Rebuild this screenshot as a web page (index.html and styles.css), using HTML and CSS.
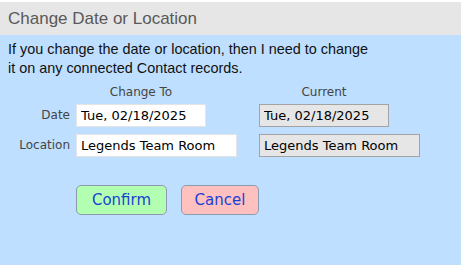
FILE: index.html
```html
<!DOCTYPE html>
<html lang="en">

<head>
    <meta charset="UTF-8">
    <meta name="viewport" content="width=device-width, initial-scale=1.0">
    <title>Change Date or Location</title>
    <link rel="stylesheet" href="styles.css">
</head>

<body>
    <div class="title">Change Date or Location</div>

    <div class="content">
        <p class="note">If you change the date or location, then I need to change<br>it on any connected Contact records.</p>

        <div class="form">
            <span></span>
            <span class="head">Change To</span>
            <span class="head">Current</span>

            <label class="name" for="newDate">Date</label>
            <input class="input date" id="newDate" type="text" value="Tue, 02/18/2025">
            <input class="input date current" type="text" value="Tue, 02/18/2025" readonly>

            <label class="name" for="newLoc">Location</label>
            <input class="input loc" id="newLoc" type="text" value="Legends Team Room">
            <input class="input loc current" type="text" value="Legends Team Room" readonly>
        </div>

        <div class="buttons">
            <input class="btn confirm" type="button" value="Confirm">
            <input class="btn cancel" type="button" value="Cancel">
        </div>
    </div>
</body>

</html>
```

FILE: styles.css
```css
html,
body {
    height: 100%;
}

body {
    margin: 0;
    border-top: 2px solid #fff;
    box-sizing: border-box;
    background-color: #bedfff;
    font-family: "Liberation Sans", Arial, sans-serif;
}

.title {
    height: 33px;
    line-height: 34px;
    padding-left: 8px;
    background-color: #e6e6e6;
    color: #595959;
    font-size: 17px;
}

.content {
    padding: 0 8px;
}

.note {
    margin: 5px 0 0;
    font-size: 14.4px;
    line-height: 19px;
    color: #111;
}

.form {
    display: grid;
    grid-template-columns: 62px 177px 161px;
    column-gap: 6px;
    row-gap: 7px;
    margin-top: 7px;
    font-family: "DejaVu Sans", Tahoma, sans-serif;
}

.head {
    width: 130px;
    text-align: center;
    font-size: 12px;
    color: #444;
    line-height: 14px;
    margin-bottom: -2px;
}

label.name {
    text-align: right;
    font-size: 12px;
    color: #444;
    line-height: 23px;
}

.input {
    height: 23px;
    box-sizing: border-box;
    border: 1px solid #e4e4e4;
    padding: 0 4px;
    font-family: "DejaVu Sans", Tahoma, sans-serif;
    font-size: 13px;
    color: #000;
    background-color: #fff;
    outline: none;
}

.input.date {
    width: 130px;
}

.input.loc {
    width: 161px;
}

.input.current {
    background-color: #e6e6e6;
    border-color: #a3a3a3;
}

.buttons {
    display: flex;
    gap: 14px;
    margin: 28px 0 0 68px;
}

.btn {
    height: 30px;
    border: 1px solid #8b9bad;
    border-radius: 5px;
    color: #1a3fd4;
    font-family: "DejaVu Sans", Tahoma, sans-serif;
    font-size: 15px;
    cursor: pointer;
}

.confirm {
    width: 91px;
    background-color: #b2ffb2;
}

.cancel {
    width: 78px;
    background-color: #ffc0c0;
}
```
